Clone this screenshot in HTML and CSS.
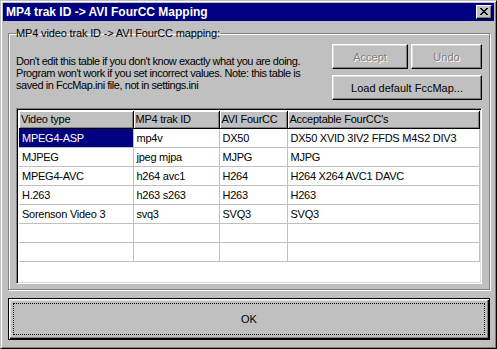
FILE: index.html
```html
<!DOCTYPE html>
<html>
<head>
<meta charset="utf-8">
<link rel="stylesheet" href="styles.css">
</head>
<body>
<div class="window">
  <div class="titlebar">
    <span class="title">MP4 trak ID -&gt; AVI FourCC Mapping</span>
    <span class="close"><svg width="8" height="7" viewBox="0 0 8 7"><path d="M0 0h2v1h-2zM6 0h2v1h-2zM1 1h2v1h-2zM5 1h2v1h-2zM2 2h4v1h-4zM3 3h2v1h-2zM2 4h4v1h-4zM1 5h2v1h-2zM5 5h2v1h-2zM0 6h2v1h-2zM6 6h2v1h-2z" fill="#000"/></svg></span>
  </div>
  <div class="client">
    <fieldset class="group">
      <legend>MP4 video trak ID -&gt; AVI FourCC mapping:</legend>
      <div class="top">
        <p class="note">Don't edit this table if you don't know exactly what you are doing. Program won't work if you set incorrect values. Note: this table is saved in FccMap.ini file, not in settings.ini</p>
        <div class="btns">
          <div class="btnrow">
            <button class="btn disabled accept">Accept</button>
            <button class="btn disabled undo">Undo</button>
          </div>
          <button class="btn load">Load default FccMap...</button>
        </div>
      </div>
      <div class="grid">
        <table>
          <thead>
            <tr><th class="c1">Video type</th><th class="c2">MP4 trak ID</th><th class="c3">AVI FourCC</th><th class="c4">Acceptable FourCC's</th></tr>
          </thead>
          <tbody>
            <tr><td class="sel">MPEG4-ASP</td><td>mp4v</td><td>DX50</td><td>DX50 XVID 3IV2 FFDS M4S2 DIV3</td></tr>
            <tr><td>MJPEG</td><td>jpeg mjpa</td><td>MJPG</td><td>MJPG</td></tr>
            <tr><td>MPEG4-AVC</td><td>h264 avc1</td><td>H264</td><td>H264 X264 AVC1 DAVC</td></tr>
            <tr><td>H.263</td><td>h263 s263</td><td>H263</td><td>H263</td></tr>
            <tr><td>Sorenson Video 3</td><td>svq3</td><td>SVQ3</td><td>SVQ3</td></tr>
            <tr><td></td><td></td><td></td><td></td></tr>
            <tr><td></td><td></td><td></td><td></td></tr>
          </tbody>
        </table>
      </div>
    </fieldset>
    <button class="btn ok"><span class="focus">OK</span></button>
  </div>
</div>
</body>
</html>
```

FILE: styles.css
```css
* { box-sizing: border-box; }
html, body { margin: 0; padding: 0; }
body {
  width: 497px;
  height: 349px;
  background: #c0c0c0;
  font-family: "Liberation Sans", Arial, sans-serif;
  font-size: 11px;
  color: #000;
}
.window {
  width: 497px;
  height: 349px;
  background: #c0c0c0;
  border: 1px solid;
  border-color: #c0c0c0 #000 #000 #c0c0c0;
  box-shadow: inset 1px 1px #fff, inset -1px -1px #808080;
  padding: 2px;
  display: flex;
  flex-direction: column;
}
.titlebar {
  height: 18px;
  background: #000080;
  color: #fff;
  display: flex;
  align-items: center;
  justify-content: space-between;
  padding: 0 2px 0 3px;
}
.title {
  font-weight: bold;
  font-size: 12px;
}
.close {
  width: 16px;
  height: 14px;
  background: #c0c0c0;
  border: 1px solid;
  border-color: #fff #000 #000 #fff;
  box-shadow: inset -1px -1px #808080;
  display: flex;
  align-items: center;
  justify-content: center;
  padding-bottom: 1px;
}
.close svg { display: block; }
.client {
  flex: 1;
  display: flex;
  flex-direction: column;
  padding: 6px 4px 5px 5px;
}
.group {
  margin: 0;
  border: 1px solid #808080;
  box-shadow: inset 1px 1px #fff, 1px 1px #fff;
  padding: 4px 7px 5px 7px;
  min-width: 0;
}
.group legend {
  padding: 0 1px 0 0;
  margin-left: 0;
  line-height: 13px;
  letter-spacing: -0.15px;
}
.top {
  display: flex;
  justify-content: space-between;
  height: 64px;
}
.note {
  margin: 11px 0 0 0;
  width: 312px;
  line-height: 12px;
  letter-spacing: -0.45px;
}
.btns {
  width: 150px;
  display: flex;
  flex-direction: column;
  gap: 6px;
}
.btnrow {
  display: flex;
  justify-content: space-between;
}
.btn {
  font-family: inherit;
  font-size: 11px;
  background: #c0c0c0;
  color: #000;
  border: 1px solid;
  border-color: #fff #000 #000 #fff;
  box-shadow: inset -1px -1px #808080, inset 1px 1px #dfdfdf;
  height: 25px;
  padding: 0;
  margin: 0;
}
.accept { width: 76px; }
.undo { width: 71px; }
.load { width: 150px; }
.disabled {
  color: #808080;
  text-shadow: 1px 1px #fff;
}
.grid {
  height: 176px;
  background: #fff;
  border: 1px solid;
  border-color: #808080 #fff #fff #808080;
  box-shadow: inset 1px 1px #000, inset -1px -1px #dfdfdf;
  padding: 2px 3px 2px 2px;
  overflow: hidden;
}
table {
  border-collapse: collapse;
  table-layout: fixed;
  width: 460px;
  letter-spacing: -0.25px;
}
th {
  background: #c0c0c0;
  font-weight: normal;
  text-align: left;
  height: 17px;
  padding: 0 0 0 2px;
  border-right: 1px solid #000;
  border-bottom: 1px solid #000;
  box-shadow: inset 1px 1px #fff, inset -1px -1px #808080;
  white-space: nowrap;
}
.c1 { width: 114px; }
.c2 { width: 86px; }
.c3 { width: 68px; }
.c4 { width: 192px; }
td {
  height: 19px;
  padding: 0 0 0 3px;
  border-right: 1px solid #c0c0c0;
  border-bottom: 1px solid #c0c0c0;
  white-space: nowrap;
  overflow: hidden;
}
td.sel {
  background: #000080;
  color: #fff;
}
.ok {
  margin-top: 8px;
  height: 42px;
  width: 100%;
  border: 1px solid #000;
  box-shadow: inset 1px 1px #fff, inset -1px -1px #000, inset -2px -2px #808080, inset 2px 2px #dfdfdf;
  padding: 4px;
  display: flex;
}
.focus {
  flex: 1;
  border: 1px dotted #000;
  display: flex;
  align-items: center;
  justify-content: center;
}
```
